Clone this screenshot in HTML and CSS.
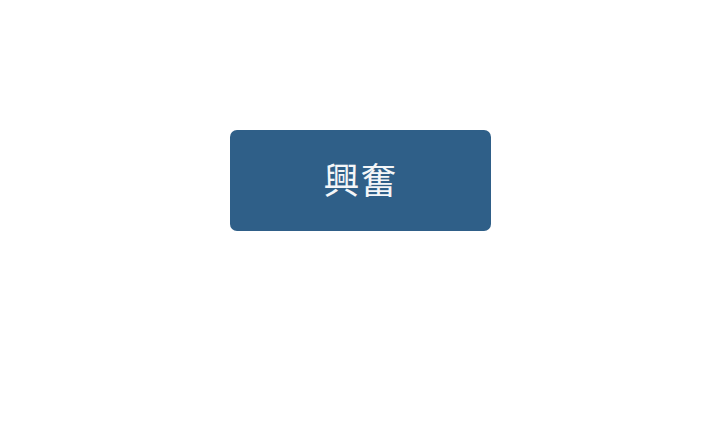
FILE: index.html
```html
<!DOCTYPE html>
<html lang="zh-Hant">
<head>
<meta charset="UTF-8">
<meta name="viewport" content="width=device-width, initial-scale=1.0">
<title>興奮</title>
<link rel="stylesheet" href="styles.css">
</head>
<body>

<div class="stage">
  <button class="moodButton" type="button">興奮</button>
</div>

</body>
</html>
```

FILE: styles.css
```css
body {
  margin: 0;
  background-color: #fff;
  font-family: "Noto Sans CJK TC", "Noto Sans", sans-serif;
}
.stage {
  padding: 130px 0 0 230px; /* 按鈕的位置 */
}
.moodButton {
  display: flex;
  justify-content: center;
  align-items: center;
  width: 261px;
  height: 101px;
  border: none;
  border-radius: 7px;
  background-color: #2f5f88;
  color: #f4f6f8;
  font-family: inherit;
  font-size: 36px;
  font-weight: 400;
  letter-spacing: 1px;
  padding: 0 0 5px 0;
}
```
